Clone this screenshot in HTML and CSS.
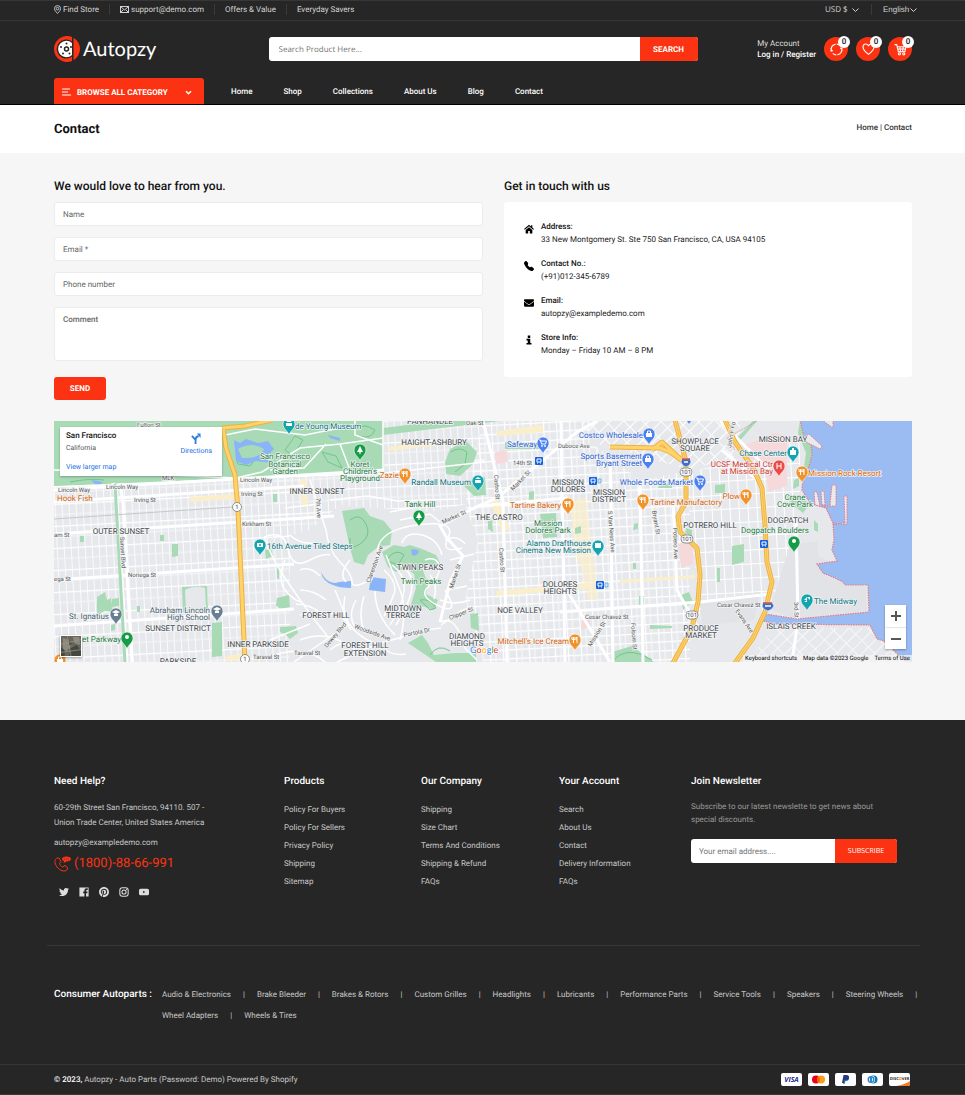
FILE: index.html
```html
<!DOCTYPE html>
<html lang="en">
<head>
<meta charset="utf-8">
<meta name="viewport" content="width=device-width, initial-scale=1">
<title>Contact - Autopzy</title>
<link rel="stylesheet" href="styles.css">
</head>
<body>
<header class="header">
  <div class="topbar">
    <div class="wrap topbar-row">
      <ul class="top-links">
        <li><a href="#"><svg class="ico-pin" viewBox="0 0 16 20"><path d="M8 1a7 7 0 0 0-7 7c0 4.500 7 11 7 11s7-6.500 7-11a7 7 0 0 0-7-7z"/><circle cx="8" cy="8" r="3"/></svg>Find Store</a></li>
        <li><a href="#"><svg class="ico-mail" viewBox="0 0 18 14"><rect x="1" y="1" width="16" height="12"/><path d="M1 1l8 7 8-7M1 13l6-6M17 13l-6-6"/></svg>support@demo.com</a></li>
        <li><a href="#">Offers &amp; Value</a></li>
        <li><a href="#">Everyday Savers</a></li>
      </ul>
      <div class="top-selects">
        <label class="pick pick-currency"><select aria-label="Currency"><option>USD $</option></select><svg viewBox="0 0 14 8"><path d="M1 1l6 6 6-6"/></svg></label>
        <label class="pick pick-language"><select aria-label="Language"><option>English</option></select><svg viewBox="0 0 14 8"><path d="M1 1l6 6 6-6"/></svg></label>
      </div>
    </div>
  </div>

  <div class="wrap brand-row">
    <a class="logo" href="#">
      <svg viewBox="0 0 52 52">
        <path fill="#fb3312" d="M36 2v48A26 26 0 1 1 36 2z"/>
        <path fill="#fb3312" d="M39 3.500a26 26 0 0 1 0 45z"/>
        <path fill="#262626" d="M36 11v30a19 19 0 1 1 0-30z"/>
        <path fill="#fff" d="M36 14v24a16.500 16.500 0 1 1 0-24z"/>
        <circle cx="25" cy="26" r="4" fill="#fff" stroke="#262626" stroke-width="3"/>
        <g fill="#262626"><circle cx="25" cy="15" r="2"/><circle cx="14" cy="22" r="2"/><circle cx="18" cy="35" r="2"/><circle cx="31" cy="35" r="2"/><circle cx="34" cy="22" r="2"/></g>
      </svg>
      <span>Autopzy</span>
    </a>
    <form class="search">
      <input type="search" aria-label="Search products" placeholder="Search Product Here...">
      <button type="button">SEARCH</button>
    </form>
    <div class="account">
      <div class="account-text"><span>My Account</span><a href="#">Log in / Register</a></div>
      <a class="round" href="#" aria-label="Compare"><svg viewBox="0 0 24 24"><path d="M2 11a10 10 0 0 1 17-6M22 13a10 10 0 0 1-17 6" stroke-dasharray="13 2"/><path d="M22 8v4l-3-3M2 16v-4l3 3"/></svg><b>0</b></a>
      <a class="round" href="#" aria-label="Wishlist"><svg viewBox="0 0 24 24"><path d="M12 21C5 16 2 12 2 8a5 5 0 0 1 10-2 5 5 0 0 1 10 2c0 4-3 8-10 13z"/></svg><b>0</b></a>
      <a class="round" href="#" aria-label="Cart"><svg viewBox="0 0 24 24"><path d="M1 3h4l3 13h12l2-9H6M7 11h14M11 7l1 9M17 7l-1 9"/><circle cx="10" cy="20" r="2"/><circle cx="18" cy="20" r="2"/></svg><b>0</b></a>
    </div>
  </div>

  <nav class="wrap nav-row">
    <button class="browse" type="button">
      <svg class="ico-bars" viewBox="0 0 9 8"><path d="M0 1h8M0 4h6M0 7h9"/></svg>
      <span>BROWSE ALL CATEGORY</span>
      <svg class="ico-down" viewBox="0 0 14 9"><path d="M2 2l5 5 5-5"/></svg>
    </button>
    <ul class="menu">
      <li><a href="#">Home</a></li><li><a href="#">Shop</a></li><li><a href="#">Collections</a></li><li><a href="#">About Us</a></li><li><a href="#">Blog</a></li><li><a href="#">Contact</a></li>
    </ul>
  </nav>
</header>

<div class="title-band">
  <div class="wrap title-row">
    <h1>Contact</h1>
    <p class="crumbs"><a href="#">Home</a> | <span>Contact</span></p>
  </div>
</div>

<main class="wrap main">
  <div class="columns">
    <section>
      <h2>We would love to hear from you.</h2>
      <form class="contact-form">
        <input type="text" aria-label="Name" placeholder="Name">
        <input type="email" aria-label="Email" placeholder="Email *">
        <input type="tel" aria-label="Phone number" placeholder="Phone number">
        <textarea aria-label="Comment" placeholder="Comment"></textarea>
        <button type="button">SEND</button>
      </form>
    </section>
    <section>
      <h2>Get in touch with us</h2>
      <ul class="info-card">
        <li><svg viewBox="0 0 24 24"><path d="M12 2L0 12l2 2L12 5.500 22 14l2-2-4-3.500V3h-3v3z"/><path d="M12 7.500L4 14.500V23h6v-6h4v6h6v-8.500z"/></svg><div><strong>Address:</strong><span>33 New Montgomery St. Ste 750 San Francisco, CA, USA 94105</span></div></li>
        <li><svg viewBox="0 0 16 16"><path d="M1.885.511a1.745 1.745 0 0 1 2.610.163L6.290 2.980c.329.423.445.974.315 1.494l-.547 2.190a.678.678 0 0 0 .178.643l2.457 2.457a.678.678 0 0 0 .644.178l2.189-.547a1.745 1.745 0 0 1 1.494.315l2.306 1.794c.829.645.905 1.870.163 2.611l-1.034 1.034c-.740.740-1.846 1.065-2.877.702a18.634 18.634 0 0 1-7.010-4.420 18.634 18.634 0 0 1-4.420-7.009c-.362-1.030-.037-2.137.703-2.877z"/></svg><div><strong>Contact No.:</strong><span>(+91)012-345-6789</span></div></li>
        <li><svg viewBox="0 0 512 512"><path d="M502.300 190.800c3.900-3.100 9.700-.2 9.700 4.700V400c0 26.500-21.500 48-48 48H48c-26.500 0-48-21.500-48-48V195.600c0-5 5.700-7.800 9.700-4.700 22.400 17.400 52.100 39.500 154.100 113.600 21.100 15.400 56.700 47.800 92.200 47.600 35.700.3 72-32.800 92.300-47.600 102-74.100 131.600-96.300 154-113.700zM256 320c23.200.4 56.600-29.200 73.400-41.400 132.700-96.300 142.800-104.700 173.400-128.700 5.800-4.500 9.200-11.500 9.200-18.900v-19c0-26.500-21.500-48-48-48H48c-26.500 0-48 21.500-48 48v19c0 7.400 3.400 14.300 9.200 18.900 30.600 23.900 40.700 32.400 173.400 128.700 16.800 12.200 50.200 41.800 73.400 41.400z"/></svg><div><strong>Email:</strong><span>autopzy@exampledemo.com</span></div></li>
        <li><svg viewBox="0 0 24 24"><path d="M9 1h6v6H9zM6 9h9v10h3v4H6v-4h3v-6H6z"/></svg><div><strong>Store Info:</strong><span>Monday – Friday 10 AM – 8 PM</span></div></li>
      </ul>
    </section>
  </div>

  <section class="map" aria-label="Map of San Francisco">
    <svg class="map-art" viewBox="54 421 858 241" preserveAspectRatio="xMidYMid slice">
      <defs>
        <pattern id="gw" width="7" height="22" patternUnits="userSpaceOnUse" patternTransform="rotate(-3)"><path d="M0 0v22" stroke="#fff" stroke-width="1.600"/><path d="M0 0h7" stroke="#fff" stroke-width="2.500"/><path d="M0 11h7" stroke="#f6f7f8" stroke-width="1"/></pattern>
        <pattern id="ge" width="13" height="9" patternUnits="userSpaceOnUse" patternTransform="rotate(-3)"><path d="M0 0v9M0 0h13" stroke="#fff" stroke-width="2.400"/><path d="M6 0v9" stroke="#f8f9fa" stroke-width="1"/></pattern>
        <pattern id="gp" width="9" height="14" patternUnits="userSpaceOnUse" patternTransform="rotate(-3)"><path d="M0 0v14M0 0h9" stroke="#fff" stroke-width="2"/></pattern>
        <pattern id="gd" width="13" height="9" patternUnits="userSpaceOnUse" patternTransform="rotate(-45)"><path d="M0 0v9M0 0h13" stroke="#fff" stroke-width="1.800"/></pattern>
        <g id="pin"><path d="M0 11C-1 7-6 5-6 0a6 6 0 0 1 12 0c0 5-5 7-6 11z" stroke="#fff" stroke-width=".6"/></g>
        <g id="fork" fill="none" stroke="#fff" stroke-width="1"><path d="M-1.500-3v6M-3-3v2.500h3V-3M2 3v-6q-1 1-1 3h1"/></g>
        <g id="tree" fill="#fff"><path d="M0-4l3 6H.6v2H-.6V2H-3z"/></g>
        <g id="bag" fill="#fff"><path d="M-3-1h6v4h-6z"/><path d="M-1.500-1v-2h3v2" fill="none" stroke="#fff"/></g>
        <g id="cartg" fill="none" stroke="#fff"><path d="M-4-3h1.500l1 4h4l1-3h-6"/><circle cx="-1" cy="3" r=".6"/><circle cx="2" cy="3" r=".6"/></g>
        <g id="bus"><rect x="-4" y="-4" width="8" height="8" rx="1" fill="#1463dc"/><path d="M-2-2h4v3h-4zM-2 2h1M1 2h1" fill="none" stroke="#fff"/></g>
        <g id="hw"><rect x="-6" y="-4" width="12" height="8" rx="4" fill="#fff" stroke="#777" stroke-width=".8"/><text y="2" text-anchor="middle" class="s">101</text></g>
      </defs>
      <rect x="54" y="421" width="858" height="241" fill="#e6e8ec"/>
      <path fill="url(#gw)" d="M54 478L290 470V662H54z"/>
      <path fill="url(#gw)" d="M275 478L383 470V421H485V500L430 512 340 505 310 530 275 540z"/>
      <path fill="url(#ge)" d="M483 421H690V662H483L465 600 478 540 465 505z"/>
      <path fill="url(#gp)" d="M685 470L800 440V540L770 612 700 620z"/>
      <path fill="#e6e8ec" d="M590 421H740V462L640 480 590 442z"/>
      <path fill="url(#gd)" d="M580 421H740V455L690 470 600 445z"/>
      <path fill="url(#gd)" d="M775 628L870 628 905 662H745z" opacity=".7"/>
      <path fill="#e1e3e7" d="M790 545l28-4v15l18 8-18 1 10 12 38 10 1 24-72 8-25-10zM700 602l60-10-6 28-52 6z"/>

      <g fill="#fbeecb"><path d="M190 497l45-3v5l-45 3zM300 480l6-1 2 27-6 1zM496 591l94-8v5l-94 8zM388 447l55-6v4l-55 6zM497 431l46-6v7l-46 4zM226 656l22-3v6l-22 2zM490 500l8-1 12 30-8 3zM620 580l75-5v3l-75 5z"/><path d="M570 500l16-2 12 100-10 2-6-30-8-20z" opacity=".7"/></g>
      <g fill="#f6d9da"><path d="M495 452l12-2 1 12-12 2zM678 544l15-5v25l-12 4zM745 445l30-12 12 3v50l-18 6-5-28-20-8zM582 621l8-2v8l-9 3z"/></g>

      <g fill="#a8dab5">
        <path d="M54 421H383L384 473 236 480 54 486z"/>
        <path d="M383 435L500 421H440L383 428z"/>
        <path d="M450 449L466 441 477 452 473 464 460 476 446 474 445 462z"/>
        <path d="M467 481l18-4 1 18-12 1-10-10z"/>
        <path d="M342 511l22-3 6 8 14 5 8 10-2 14-12 2-10 8-4 10-10-3-4-14z"/>
        <path d="M382 552l12-7 10 2 6-2 12 4 14 6 4 8-8 6-4-5-6 4 6 16-2 10 12 6-4 10-12-4-10 10-4-2 8-26-2-14-8-6-10 4-8-5z"/>
        <path d="M408 643l14-8 6 8 6 12 20-2 18 0-4-10 8 8v11H436z"/><path d="M470 614l8-1 1 18-8-3z"/>
        <path d="M540 514l16-1 1 24-14 1zM488 521l4-1 1 12-5-3zM529 492l5-1v9l-5 0zM575 528l6-2v7l-6 1zM505 442l20 3 20-2v6l-40 0z"/>
        <path d="M172 544l6 0v12l-6 1zM97 597l8-5 2 8 4-2 2 14-8-1-8 4zM112 599l7-1v8l-7 1zM212 623l10-1v34l-10 1zM111 625l4-1v6l-4 1zM137 606h3v6h-3zM160 535h4v6h-4zM80 536h4v6h-4zM273 494h4v8h-4z"/>
        <path d="M277 598l12-3 1 12-10 2-4-4zM280 627l16-1 2 7-8 6-4-4-6-3zM265 550l6-1 2 7-7 3zM277 566l2 0v13l-2-1z"/>
        <path d="M715 485l10-1v9h-10zM732 546l12-2v18l-12 3zM681 595l8-3 4 10-10 8zM634 524l4-1v6l-5 1zM639 596h5v11h-5zM633 563h3v6h-3zM717 568h3v14h-3zM686 528l6 2v6l-7-3zM814 520l4 4v8l-4-2zM660 484l12-1v5l-14 0zM794 480l5-2v8l-6 3z"/>
        <path d="M800 421l4 16 7 8 1 10-4 15-4-3 2-14-8-20zM735 440l18-19h4l-20 23z"/>
        <path d="M612 652l20-6 22 16h-42z"/>
        <path d="M182 587l25-1 1 24-25 2z"/>
        <path d="M650 625l22 1v2l-22 1zM785 495l18 2 6 8-6 8-10-8z"/>
      </g>
      <path fill="#e6e8ec" d="M185 590c4-3 14-4 20-2l1 20-20 2z"/>
      <g fill="none" stroke="#73c58b" stroke-width="1">
        <path d="M285 450l10-14 8 4-10 16zM322 452l14 4 6 12-14-6zM236 458q10-10 20 0l-6 8-12-2zM451 452q8-6 16 0l-2 12-10 8M350 520q10-8 16 4t-6 20-10-6M388 558q8-10 16-3l-6 10-10-4M420 600q10-2 16 8l-6 2-10-10M430 655q8-12 20-4M612 662q14-18 40-2M355 430q8-8 20 0-4 10-16 6M70 482q20-4 34-2"/>
      </g>
      <g fill="#8ab4f8"><path d="M234 440l6 3 6-4 12 4 10-2 6 8-6 6 4 8-16-2-10 4-10-4z"/><path d="M321 572q7 14 18 10l12-1v7q-12 0-18-3-10-3-12-13zM371 577l15 2-1 13-16-2zM411 550q4-2 8 1-2 6-7 4zM91 480l6 6 6-3-4-2zM328 435l12 3v3l-10-3z"/></g>
      <path fill="#a8dab5" d="M238 449q14-8 26 0-4 10-22 9z"/>

      <g fill="none" stroke="#fff" stroke-width="1.500">
        <path d="M54 470L236 478 262 472 300 448 340 444 383 438M225 435l30-6 50 6 40-8M270 470l34-2 22-24M355 421v14l28 10M340 444l10 26M383 421v52M54 487L236 479 385 473 485 462" />
        <path d="M264 537q8 20 14 30t20 30 30 40M264 537q20-8 24 12t20 12 22-6M285 560q-8 20 0 30t16 12M300 570q10-4 20 6M310 480l16 50q2 20 14 32t12 20 20-3l6-25q-2-12 10-20t40-10 20 14 14 10"/>
        <path d="M335 590l14 34q10 14 28 20l22-6q20-8 42-10M441 625l20-14 10-4M441 622q12-6 20 14l4 12 12 12M377 644l-40 18M349 624l-35 24-20 14M300 615q30-8 46 6M400 640q8-30 0-50t-14-35M395 635q-20-20-20-44M356 600q-8 14-2 26"/>
        <path d="M400 565q12 6 12 20t-16 40M392 565q14 10 12 26t-14 34M384 570q14 12 10 24t-10 22M425 560q12-4 14 6t-10 20 10 20 6-16M442 555q-4-16-20-20t-20 8M330 500l38-4 30 5 60-2M445 540q12-6 20 4M300 640q20-8 38 0t30 20M270 640l40-16M275 655q30-10 50 7"/>
        <path d="M345 596q-4 20 6 34M364 596q-6 20 0 34M290 535q10 10 26 8M292 520l30-4M285 508l34-4M430 575q8 10 4 24M447 590l20-4M450 560l24-6M440 600q14 6 30 0M400 520l30-6 10 8M390 512l30-6M350 560q-12 14-4 22M330 650q12-10 24-6M386 650q8 6 20 4M300 590q14 0 26 10M296 604q14 0 26 10"/>
      </g>
      <g fill="none" stroke="#fff" stroke-width="3">
        <path d="M113 483l4 20 10 159M120 483l3 20 9 159M54 502l250-16M54 534l280-18M54 580l240-16M54 626l240-17M54 490l330-20M483 421l20 80 4 161M561 421l4 241M610 455l3 207M640 480l3 182M673 500l4 90 20 36M796 520l2 100-6 42"/>
        <path d="M597 421L577 432 497 498 478 506 440 526 447 538 463 556 450 582 440 622M478 506l90-8M560 612l140-10 70-8M610 662l-42-70M722 450l40 34M720 421l50 50"/>
      </g>
      <path d="M115 484l10 178" fill="none" stroke="#a8dab5" stroke-width="3"/>
      <path d="M54 519L232 507" fill="none" stroke="#c6c8cc"/>
      <path d="M735 450l-8-12 30-17" fill="none" stroke="#ea7f86" stroke-dasharray="1 1"/>

      <path fill="#9bbcf2" stroke="#e57b86" stroke-width="1.200" stroke-dasharray="1.500 1" d="M800 420l4 17 7 8 1 10-4 15-5 5-1 15 6 10 7 5 11 3 7 15 1 17-2 10 5 11-20 3 6 9 12 5 8 4 2 3h23l1 27-72 7-32-5-2 7 12 3 95 1 7 14 7 2 21 20h10V418z"/>
      <g fill="#e8eaed" stroke="#e57b86" stroke-width="1" stroke-dasharray="1.500 1"><path d="M805 437l4-3 13 12-2 3-14-7zM822 420l11 8V420M815 505l-1-13 3 0 3 14zM822 505l-1-14h3l1 14zM830 505l2-20h4v21h-12zM833 524l12-1-1-27h3v28z"/></g>

      <g fill="none" stroke-linejoin="round">
        <g stroke="#eeb043" stroke-width="5"><path d="M272 420L245 426 223 428 226 448 235 475 238 510 245 662M675 420l11 42v40l-8 14 2 16 17 16 3 27-2 27-6 26-19 35M725 420l10 22 18 26 9 20 3 37 2 37 5 20-7 30-12 26-18 25M610 447l50 1 10 4 14 10M652 450l10-8 22 20M609 421"/></g>
        <g stroke="#fdd36a" stroke-width="3"><path d="M272 420L245 426 223 428 226 448 235 475 238 510 245 662M675 420l11 42v40l-8 14 2 16 17 16 3 27-2 27-6 26-19 35M725 420l10 22 18 26 9 20 3 37 2 37 5 20-7 30-12 26-18 25M610 447l50 1 10 4 14 10M652 450l10-8 22 20M609 421"/></g>
        <path d="M675 420l11 42v40l-8 14 2 16 17 16 3 27-2 27-6 26-19 35M725 420l10 22 18 26 9 20 3 37 2 37 5 20-7 30-12 26-18 25" stroke="#eeb043" stroke-width=".7"/>
      </g>

      <g class="street">
        <text x="58" y="492">Lincoln Way</text><text x="106" y="489">Lincoln Way</text><text x="240" y="482">Lincoln Way</text><text x="134" y="502">Irving St</text><text x="241" y="496">Irving St</text><text x="242" y="526">Kirkham St</text><text x="54" y="537">am St</text><text x="54" y="581">ega St</text><text x="128" y="577">Noriega St</text><text x="253" y="659">Taraval St</text><text x="294" y="655">Taraval St</text>
        <text transform="translate(120 537) rotate(87)">Sunset Blvd</text><text transform="translate(316 498) rotate(87)">7th Ave</text><text transform="translate(327 648) rotate(-50)">Dewey Blvd</text><text transform="translate(354 628) rotate(20)">Woodside Ave</text><text transform="translate(370 583) rotate(-70)">Clarendon Ave</text><text transform="translate(443 524) rotate(-24)">Market St</text><text transform="translate(453 589) rotate(-72)">Market St</text><text transform="translate(513 491) rotate(-46)">Market St</text><text transform="translate(494 475) rotate(86)">Castro St</text><text transform="translate(499 548) rotate(86)">Castro St</text><text transform="translate(450 620) rotate(-22)">Clipper St</text><text transform="translate(404 637) rotate(-12)">Portola Dr</text>
        <text x="513" y="465">14th St</text><text x="558" y="448">Duboce Ave</text><text x="466" y="425">Oak St</text><text x="585" y="619">Cesar Chavez St</text><text x="717" y="607">Cesar Chavez St</text><text transform="translate(608 511) rotate(86)">S Van Ness Ave</text><text transform="translate(652 511) rotate(80)">Bryant St</text><text transform="translate(673 528) rotate(88)">Potrero Ave</text><text transform="translate(591 647) rotate(-58)">Mission St</text><text transform="translate(735 611) rotate(55)">Evans Ave</text><text transform="translate(794 602) rotate(88)">3rd St</text><text transform="translate(631 623) rotate(86)">Folsom St</text><text transform="translate(731 448) rotate(-80)">John F Fo</text><text x="162" y="480">MLK</text><text x="137" y="427">Fulton St</text>
      </g>
      <g class="district">
        <text x="317" y="494">INNER SUNSET</text><text x="121" y="534">OUTER SUNSET</text><text x="178" y="631">SUNSET DISTRICT</text><text x="258" y="647">INNER PARKSIDE</text><text x="178" y="664">PARKSIDE</text><text x="326" y="618">FOREST HILL</text><text x="365" y="648">FOREST HILL</text><text x="365" y="656">EXTENSION</text><text x="430" y="424">PANHANDLE</text><text x="434" y="445">HAIGHT-ASHBURY</text><text x="499" y="520">THE CASTRO</text><text x="420" y="570">TWIN PEAKS</text><text x="403" y="611">MIDTOWN</text><text x="403" y="618">TERRACE</text><text x="467" y="639">DIAMOND</text><text x="467" y="646">HEIGHTS</text><text x="520" y="613">NOE VALLEY</text><text x="560" y="587">DOLORES</text><text x="560" y="594">HEIGHTS</text><text x="568" y="485">MISSION</text><text x="568" y="492">DOLORES</text><text x="609" y="495">MISSION</text><text x="609" y="502">DISTRICT</text><text x="695" y="444">SHOWPLACE</text><text x="695" y="451">SQUARE</text><text x="783" y="442">MISSION BAY</text><text x="710" y="528">POTRERO HILL</text><text x="788" y="523">DOGPATCH</text><text x="701" y="631">PRODUCE</text><text x="701" y="638">MARKET</text><text x="791" y="629">ISLAIS CREEK</text>
      </g>
      <g class="place">
        <g class="green mid"><text x="285" y="459">San Francisco</text><text x="285" y="467">Botanical</text><text x="285" y="474">Garden</text><text x="360" y="467">Koret</text><text x="360" y="474">Children's</text><text x="360" y="481">Playground</text><text x="420" y="507">Tank Hill</text><text x="421" y="584">Twin Peaks</text><text x="548" y="526">Mission</text><text x="548" y="533">Dolores Park</text><text x="795" y="500">Crane</text><text x="795" y="507">Cove Park</text><text x="775" y="533">Dogpatch Boulders</text></g>
        <g class="green end"><text x="121" y="642">Sunset Parkway</text></g>
        <g class="teal"><text x="295" y="429">de Young Museum</text><text x="267" y="549">16th Avenue Tiled Steps</text><text x="814" y="604">The Midway</text></g>
        <g class="teal end"><text x="471" y="485">Randall Museum</text><text x="591" y="546">Alamo Drafthouse</text><text x="591" y="553">Cinema New Mission</text><text x="787" y="456">Chase Center</text></g>
        <g class="slate end"><text x="109" y="619">St. Ignatius</text><text x="210" y="613">Abraham Lincoln</text><text x="210" y="620">High School</text></g>
        <g class="orange"><text x="57" y="501">Hook Fish</text><text x="650" y="505">Tartine Manufactory</text><text x="808" y="476">Mission Rock Resort</text></g>
        <g class="orange end"><text x="399" y="478">Zazie</text><text x="561" y="508">Tartine Bakery</text><text x="569" y="644">Mitchell's Ice Cream</text><text x="740" y="499">Plow</text></g>
        <g class="blue end"><text x="537" y="447">Safeway</text><text x="643" y="438">Costco Wholesale</text><text x="642" y="459">Sports Basement</text><text x="642" y="466">Bryant Street</text><text x="693" y="485">Whole Foods Market</text></g>
        <g class="red end"><text x="773" y="467">UCSF Medical Ctr</text><text x="773" y="474">at Mission Bay</text></g>
      </g>
      <g fill="#f0932b"><use href="#pin" x="405" y="474"/><use href="#pin" x="568" y="504"/><use href="#pin" x="575" y="640"/><use href="#pin" x="643" y="500"/><use href="#pin" x="746" y="495"/><use href="#pin" x="802" y="472"/><use href="#pin" x="60" y="660"/></g>
      <use href="#fork" x="405" y="474"/><use href="#fork" x="568" y="504"/><use href="#fork" x="575" y="640"/><use href="#fork" x="643" y="500"/><use href="#fork" x="746" y="495"/><use href="#fork" x="802" y="472"/><use href="#bag" x="60" y="660"/>
      <g fill="#169b48"><use href="#pin" x="360" y="450"/><use href="#pin" x="419" y="516"/><use href="#pin" x="127" y="638"/><use href="#pin" x="794" y="542"/></g>
      <use href="#tree" x="360" y="450"/><use href="#tree" x="419" y="516"/><circle cx="127" cy="637" r="2" fill="#fff"/><circle cx="794" cy="541" r="2" fill="#fff"/>
      <g fill="#12a4af"><use href="#pin" x="289" y="424"/><use href="#pin" x="260" y="545"/><use href="#pin" x="478" y="481"/><use href="#pin" x="598" y="546"/><use href="#pin" x="793" y="452"/><use href="#pin" x="807" y="600"/></g>
      <path d="M286 422l3-2 3 2zM286 423h6v3h-6zM475 479l3-2 3 2zM475 480h6v3h-6zM257 543h6v4h-6zM595 543h6v5h-6zM790 450h2v-2h2v2h2v5h-6zM804 600l3-3v3zM807 597h3v3zM804 602h3v-2z" fill="#fff"/><circle cx="260" cy="545" r="1" fill="#12a4af"/>
      <g fill="#4a80f0"><use href="#pin" x="543" y="443"/><use href="#pin" x="649" y="434"/><use href="#pin" x="648" y="459"/><use href="#pin" x="700" y="481"/><use href="#pin" x="689" y="414"/></g>
      <use href="#cartg" x="543" y="443"/><use href="#bag" x="649" y="434"/><use href="#bag" x="648" y="459"/><use href="#cartg" x="700" y="481"/>
      <g fill="#687e92"><use href="#pin" x="116" y="614"/><use href="#pin" x="217" y="611"/></g>
      <path d="M112 612l4-2 4 2-4 2zM114 614h4v2h-4zM213 609l4-2 4 2-4 2zM215 611h4v2h-4z" fill="#fff"/>
      <use href="#pin" x="779" y="466" fill="#e94b4b"/><path d="M777 463v6M781 463v6M777 466h4" stroke="#fff"/>
      <use href="#bus" x="539" y="461"/><use href="#bus" x="593" y="481"/><use href="#bus" x="600" y="585"/><use href="#bus" x="764" y="544"/>
      <path d="M598 479h3v4h-3zM605 583h3v4h-3z" fill="#cfe6f7" stroke="#3a9bd8" stroke-width=".6"/>
      <use href="#hw" x="686" y="472"/><use href="#hw" x="687" y="539"/><use href="#hw" x="692" y="615"/>
      <g fill="#fff" stroke="#777" stroke-width=".8"><circle cx="237" cy="507" r="4.500"/><circle cx="245" cy="659" r="4.500"/></g><text x="237" y="509" class="s" text-anchor="middle">1</text><text x="245" y="661" class="s" text-anchor="middle">1</text>
      <g fill="#3d6fc4" stroke="#fff" stroke-width=".6"><path d="M682 458q4 1 8 0l1 4q-1 4-5 5-4-1-5-5zM763 602q5 1 9 0l2 4q-2 4-6 5-5-1-6-5z"/></g><path d="M682 459h8M763 603h9" stroke="#d9534f" stroke-width="1.500"/><path d="M684 462h4M765 606h6" stroke="#fff" stroke-width="1.500"/>
      <text class="google" x="470" y="653"><tspan fill="#4285f4">G</tspan><tspan fill="#ea4335">o</tspan><tspan fill="#fbbc05">o</tspan><tspan fill="#4285f4">g</tspan><tspan fill="#34a853">l</tspan><tspan fill="#ea4335">e</tspan></text>
    </svg>

    <div class="map-card">
      <div class="map-card-text"><strong>San Francisco</strong><span>California</span><a href="#">View larger map</a></div>
      <a class="directions" href="#"><svg viewBox="0 0 22 24"><path d="M10 24V15L2 6M10 17q0-10 7-10" fill="none" stroke="#2f7de1" stroke-width="4"/><path d="M13 1h8v10z" fill="#2f7de1"/></svg>Directions</a>
    </div>
    <button class="satellite" type="button" aria-label="Show satellite imagery"><svg viewBox="0 0 22 22"><path fill="#67665c" d="M0 0h22v22H0z"/><path fill="#8b8a7c" d="M2 2l6 2 3 7-5 6-4-3zM13 1h7l1 9-6-2z"/><path fill="#45483e" d="M10 14l7-4 5 6v6H9zM0 12l4 4v6H0zM8 5l4 3-3 3z"/><path d="M0 9l22-5M7 0l4 22M0 18l22-3" stroke="#9b998c" stroke-width=".8"/></svg></button>
    <div class="zoomer"><button type="button" aria-label="Zoom in"><svg viewBox="0 0 10 10"><path d="M5 0v10M0 5h10"/></svg></button><button type="button" aria-label="Zoom out"><svg viewBox="0 0 10 10"><path d="M0 5h10"/></svg></button></div>
    <p class="map-legal"><a href="#">Keyboard shortcuts</a><span>Map data ©2023 Google</span><a href="#">Terms of Use</a></p>
  </section>
</main>

<footer class="footer">
  <div class="wrap foot-grid">
    <section class="help">
      <h3>Need Help?</h3>
      <p>60-29th Street San Francisco, 94110. 507 -<br>Union Trade Center, United States America</p>
      <a class="mail" href="#">autopzy@exampledemo.com</a>
      <a class="phone" href="#"><svg viewBox="0 0 34 32"><path d="M10 4C5 3 1 7 2 13c2 9 9 16 17 17 5 1 9-3 8-7l-5-4-5 3c-3-1-5-4-6-7l3-4-3-5z" fill="none" stroke="#fb3312" stroke-width="2"/><path d="M25 1c6 0 9 2 9 5s-3 5-9 5l-6 3 1-4c-3-1-4-2-4-4 0-3 3-5 9-5z" fill="#fb3312"/><path d="M20 6h2M24 6h2M28 6h2" stroke="#262626" stroke-width="1"/></svg>(1800)-88-66-991</a>
      <ul class="social">
        <li><a href="#" aria-label="Twitter"><svg viewBox="0 0 24 24"><path d="M23.953 4.570a10 10 0 0 1-2.825.775 4.958 4.958 0 0 0 2.163-2.723c-.951.555-2.005.959-3.127 1.184a4.920 4.920 0 0 0-8.384 4.482C7.690 8.095 4.067 6.130 1.640 3.162a4.822 4.822 0 0 0-.666 2.475c0 1.710.870 3.213 2.188 4.096a4.904 4.904 0 0 1-2.228-.616v.060a4.923 4.923 0 0 0 3.946 4.827 4.996 4.996 0 0 1-2.212.085 4.936 4.936 0 0 0 4.604 3.417 9.867 9.867 0 0 1-6.102 2.105c-.390 0-.779-.023-1.170-.067a13.995 13.995 0 0 0 7.557 2.209c9.053 0 13.998-7.496 13.998-13.985 0-.210 0-.420-.015-.630A9.935 9.935 0 0 0 24 4.590z"/></svg></a></li>
        <li><a href="#" aria-label="Facebook"><svg viewBox="0 0 24 24"><path d="M1 1h22v22h-6v-8h3l.5-4H17V9q0-2 2-2h2V3h-3q-5 0-5 5v3h-3v4h3v8H1z"/></svg></a></li>
        <li><a href="#" aria-label="Pinterest"><svg viewBox="0 0 24 24"><path d="M12.017 0C5.396 0 .029 5.367.029 11.987c0 5.079 3.158 9.417 7.618 11.162-.105-.949-.199-2.403.041-3.439.219-.937 1.406-5.957 1.406-5.957s-.359-.720-.359-1.781c0-1.663.967-2.911 2.168-2.911 1.024 0 1.518.769 1.518 1.688 0 1.029-.653 2.567-.992 3.992-.285 1.193.6 2.165 1.775 2.165 2.128 0 3.768-2.245 3.768-5.487 0-2.861-2.063-4.869-5.008-4.869-3.410 0-5.409 2.562-5.409 5.199 0 1.033.394 2.143.889 2.741.099.120.112.225.085.345-.090.375-.293 1.199-.334 1.363-.053.225-.172.271-.401.165-1.495-.690-2.433-2.878-2.433-4.646 0-3.776 2.748-7.252 7.920-7.252 4.158 0 7.392 2.967 7.392 6.923 0 4.135-2.607 7.462-6.233 7.462-1.214 0-2.354-.629-2.758-1.379l-.749 2.848c-.269 1.045-1.004 2.352-1.498 3.146 1.123.345 2.306.535 3.550.535 6.607 0 11.985-5.365 11.985-11.987C23.970 5.390 18.592.026 11.985.026z"/></svg></a></li>
        <li><a href="#" aria-label="Instagram"><svg viewBox="0 0 24 24"><g fill="none" stroke="#ddd" stroke-width="2.500"><rect x="2" y="2" width="20" height="20" rx="6"/><circle cx="12" cy="12" r="5"/></g><circle cx="18" cy="6" r="1.500"/></svg></a></li>
        <li><a href="#" aria-label="YouTube"><svg viewBox="0 0 24 24"><path fill-rule="evenodd" d="M4 4h16q4 0 4 4v8q0 4-4 4H4q-4 0-4-4V8q0-4 4-4zm6 5v6l5-3z"/></svg></a></li>
      </ul>
    </section>
    <section><h3>Products</h3><ul class="links"><li><a href="#">Policy For Buyers</a></li><li><a href="#">Policy For Sellers</a></li><li><a href="#">Privacy Policy</a></li><li><a href="#">Shipping</a></li><li><a href="#">Sitemap</a></li></ul></section>
    <section><h3>Our Company</h3><ul class="links"><li><a href="#">Shipping</a></li><li><a href="#">Size Chart</a></li><li><a href="#">Terms And Conditions</a></li><li><a href="#">Shipping &amp; Refund</a></li><li><a href="#">FAQs</a></li></ul></section>
    <section><h3>Your Account</h3><ul class="links"><li><a href="#">Search</a></li><li><a href="#">About Us</a></li><li><a href="#">Contact</a></li><li><a href="#">Delivery Information</a></li><li><a href="#">FAQs</a></li></ul></section>
    <section class="news">
      <h3>Join Newsletter</h3>
      <p>Subscribe to our latest newslette to get news about special discounts.</p>
      <form class="subscribe"><input type="email" aria-label="Your email address" placeholder="Your email address...."><button type="button">SUBSCRIBE</button></form>
    </section>
  </div>

  <div class="parts">
    <h3>Consumer Autoparts :</h3>
    <ul><li><a href="#">Audio &amp; Electronics</a></li><li><a href="#">Brake Bleeder</a></li><li><a href="#">Brakes &amp; Rotors</a></li><li><a href="#">Custom Grilles</a></li><li><a href="#">Headlights</a></li><li><a href="#">Lubricants</a></li><li><a href="#">Performance Parts</a></li><li><a href="#">Service Tools</a></li><li><a href="#">Speakers</a></li><li><a href="#">Steering Wheels</a></li><li><a href="#">Wheel Adapters</a></li><li><a href="#">Wheels &amp; Tires</a></li></ul>
  </div>

  <div class="legal">
    <div class="wrap legal-row">
      <p><b>© 2023,</b> <a href="#">Autopzy - Auto Parts (Password: Demo)</a> <a href="#">Powered By Shopify</a></p>
      <ul class="cards">
        <li><svg viewBox="0 0 42 26" role="img" aria-label="Visa"><text x="21" y="18" text-anchor="middle" font-size="14" font-weight="700" font-style="italic" fill="#1a1f8f">VISA</text></svg></li>
        <li><svg viewBox="0 0 42 26" role="img" aria-label="Mastercard"><circle cx="16" cy="13" r="8" fill="#eb001b"/><circle cx="26" cy="13" r="8" fill="#f79e1b"/><path d="M21 6.800a8 8 0 0 1 0 12.400 8 8 0 0 1 0-12.400z" fill="#ff5f00"/></svg></li>
        <li><svg viewBox="0 0 42 26" role="img" aria-label="PayPal"><path d="M28 8q2 8-7 8l-2 6h-3l2-6z" fill="#2790c3"/><path d="M17 4h7q5 1 4 6-2 5-7 5h-2l-1 5h-4z" fill="#253b80"/></svg></li>
        <li><svg viewBox="0 0 42 26" role="img" aria-label="Diners Club"><path d="M19 5h4a8 8 0 0 1 0 16h-4z" fill="#0a79be"/><circle cx="18" cy="13" r="8" fill="#fff"/><circle cx="18" cy="13" r="7" fill="#3086c8"/><path d="M16 9v8a5 5 0 0 1 0-8zM20 9v8a5 5 0 0 0 0-8z" fill="#fff"/></svg></li>
        <li><svg viewBox="0 0 42 26" role="img" aria-label="Discover"><path d="M42 16v10H14q18-3 28-10z" fill="#f47920"/><text x="21" y="14" text-anchor="middle" font-size="8" font-weight="700" fill="#222">DISC<tspan fill="#f47920">O</tspan>VER</text></svg></li>
      </ul>
    </div>
  </div>
</footer>
</body>
</html>
```
FILE: styles.css
```css
* { box-sizing: border-box; }
body { margin: 0; background: #f6f6f6; color: #222; font: 8px/13px Roboto, "Liberation Sans", sans-serif; text-rendering: geometricPrecision; }
h1, h2, h3, p, ul { margin: 0; padding: 0; }
ul { list-style: none; }
a { color: inherit; text-decoration: none; }
svg { display: block; flex: none; }
button, input, textarea, select { font: inherit; color: inherit; text-rendering: inherit; border: 0; border-radius: 0; padding: 0; margin: 0; background: none; outline: 0; min-width: 0; }
button { cursor: pointer; }
.wrap { margin: 0 53px 0 54px; }

/* header */
.header { background: #262626; color: #fff; border-bottom: 1px solid #000; }
.topbar { border-top: 1px solid #373737; border-bottom: 1px solid #373737; color: #d2d2d2; }
.topbar-row { display: flex; justify-content: space-between; align-items: center; height: 19px; padding-bottom: 2px; }
.top-links { display: flex; }
.top-links li { padding-right: 10px; margin-right: 10px; border-right: 1px solid #3a3a3a; line-height: 11px; }
.top-links li:last-child { border: 0; }
.top-links a { display: flex; align-items: center; gap: 2px; }
.top-links svg { fill: none; stroke: #d2d2d2; stroke-width: 2; }
.ico-pin { width: 7px; height: 9px; }
.ico-mail { width: 9px; height: 7px; }
.top-selects { display: flex; margin-right: -5px; font-family: "Open Sans", sans-serif; }
.pick { display: flex; align-items: center; line-height: 11px; }
.pick select { appearance: none; height: 11px; }
.pick svg { width: 7px; height: 4px; fill: none; stroke: #d2d2d2; stroke-width: 2; }
.pick-currency { gap: 4px; padding-right: 12px; margin-right: 11px; border-right: 1px solid #3a3a3a; }
.pick-language { font-family: "Liberation Sans", sans-serif; }

.brand-row { display: grid; grid-template-columns: 25% 50% 1fr; align-items: center; padding: 16px 0 17px; }
.logo { display: flex; align-items: center; gap: 3px; height: 24px; font: 20px/24px Lato, sans-serif; }
.logo svg { width: 26px; height: 26px; }
.search { display: flex; height: 24px; border-radius: 3px; overflow: hidden; background: #fff; }
.search input { flex: 1; padding: 0 10px; color: #333; font-family: "Open Sans", sans-serif; }
.search button { width: 58px; background: #fb3312; font-weight: 700; }
.account { display: flex; align-items: center; justify-content: flex-end; gap: 8px; }
.account-text { display: flex; flex-direction: column; line-height: 11px; color: #ddd; }
.account-text a { font-weight: 500; color: #fff; }
.round { position: relative; display: grid; place-items: center; width: 24px; height: 24px; border-radius: 50%; background: #fb3312; }
.round svg { width: 13px; height: 13px; fill: none; stroke: #fff; stroke-width: 2; }
.round b { position: absolute; top: -1px; right: -2px; width: 12px; height: 12px; border-radius: 50%; background: #fff; color: #111; font-size: 8px; font-weight: 500; line-height: 12px; text-align: center; }

.nav-row { display: flex; align-items: center; }
.browse { display: flex; align-items: center; width: 150px; height: 26px; padding: 2px 12px 0 8px; background: #fb3312; border-radius: 3px 3px 0 0; font-weight: 700; }
.browse svg { fill: none; stroke: #fff; }
.ico-bars { width: 9px; height: 8px; margin-right: 6px; }
.ico-down { width: 7px; height: 5px; margin-left: auto; }
.browse .ico-down { stroke-width: 3; }
.menu { display: flex; gap: 31px; margin-left: 27px; font-weight: 500; }

/* page title */
.title-band { background: #fff; }
.title-row { display: flex; justify-content: space-between; align-items: center; height: 48px; }
.title-row h1 { font-size: 13px; font-weight: 700; line-height: 16px; padding-top: 2px; color: #111; }
.crumbs { font-weight: 500; padding-bottom: 4px; color: #333; }

/* contact */
.main { padding: 26px 0 58px; }
.columns { display: grid; grid-template-columns: 50% 1fr; gap: 21px; }
h2 { font-size: 12px; font-weight: 500; line-height: 14px; margin-bottom: 9px; color: #111; }
.contact-form { display: flex; flex-direction: column; gap: 11px; align-items: stretch; }
.contact-form input, .contact-form textarea { height: 24px; padding: 0 8px; background: #fff; border: 1px solid #ececec; border-radius: 3px; }
.contact-form textarea { height: 54px; padding: 5px 8px; resize: none; }
.contact-form ::placeholder { color: #666; opacity: 1; }
.contact-form textarea::placeholder { font-weight: 500; }
.contact-form button { align-self: flex-start; width: 52px; height: 23px; margin-top: 5px; border-radius: 3px; background: #fb3312; color: #fff; font-weight: 700; }
.info-card { display: flex; flex-direction: column; gap: 11px; padding: 18px 20px 20px; background: #fff; border-radius: 3px; }
.info-card li { display: flex; gap: 7px; }
.info-card svg { width: 10px; height: 10px; margin-top: 4px; fill: #000; }
.info-card strong, .info-card span { display: block; }
.info-card strong { font-weight: 500; color: #111; }

/* map */
.map { position: relative; margin-top: 21px; overflow: hidden; }
.map-art { width: 100%; height: 241px; font-family: Roboto, sans-serif; }
.map-art text { paint-order: stroke; stroke: #f4f5f6; stroke-width: 1.500px; stroke-linejoin: round; }
.street, .s { font-size: 6px; fill: #555; }
.district { font-size: 8px; font-weight: 400; fill: #44494e; text-anchor: middle; }
.place { font-size: 8px; font-weight: 400; }
.place .mid { text-anchor: middle; }
.place .end { text-anchor: end; }
.green { fill: #1c7c42; }
.teal { fill: #0b7480; }
.slate { fill: #4d6272; }
.orange { fill: #d5650c; }
.blue { fill: #2a5fd0; }
.red { fill: #d0352f; }
.map-art .google { font: 500 9px Lato, sans-serif; stroke: #fff; }
.map-card { position: absolute; left: 6px; top: 6px; display: flex; justify-content: space-between; width: 162px; height: 49px; padding: 3px 10px 3px 6px; background: #fff; box-shadow: 0 1px 2px #0004; }
.map-card-text { display: flex; flex-direction: column; color: #555; }
.map-card strong { font-weight: 500; color: #111; line-height: 12px; }
.map-card span { font-size: 7px; line-height: 12px; }
.map-card a { font-size: 7px; color: #1a73e8; }
.map-card-text a { margin-top: auto; line-height: 11px; }
.map-card .directions { display: flex; flex-direction: column; align-items: center; gap: 2px; padding-top: 3px; line-height: 10px; }
.directions svg { width: 10px; height: 11px; }
.satellite { position: absolute; left: 6px; bottom: 5px; width: 22px; height: 22px; border: 1px solid #fff; box-shadow: 0 1px 2px #0006; }
.zoomer { position: absolute; right: 6px; bottom: 13px; width: 21px; background: #fff; box-shadow: 0 1px 2px #0005; }
.zoomer button { display: grid; place-items: center; width: 100%; height: 22px; }
.zoomer button + button { border-top: 1px solid #e6e6e6; }
.zoomer svg { width: 10px; height: 10px; stroke: #555; stroke-width: 2; }
.map-legal { position: absolute; right: 0; bottom: 0; display: flex; gap: 6px; padding: 0 2px; background: #f5f5f5c0; color: #000; font-size: 6px; line-height: 7px; }

/* footer */
.footer { background: #262626; color: #c8c8c8; border-bottom: 1px solid #3a3a3a; }
.foot-grid { display: grid; grid-template-columns: 230fr 137fr 138fr 132fr 221fr; padding: 54px 0 48px; }
.footer h3 { font-size: 10px; font-weight: 500; line-height: 15px; color: #fff; }
.links { margin-top: 12px; line-height: 18px; }
.help p { margin-top: 11px; line-height: 15px; }
.mail { display: block; margin-top: 6px; line-height: 14px; }
.phone { display: flex; align-items: center; gap: 3px; margin-top: 5px; color: #fb3312; font-size: 13px; line-height: 18px; }
.phone svg { width: 17px; height: 16px; }
.social { display: flex; gap: 10px; margin: 14px 0 0 5px; }
.social svg { width: 10px; height: 10px; fill: #ddd; }
.news p { margin-top: 11px; color: #999; max-width: 206px; }
.subscribe { display: flex; width: 206px; height: 24px; margin-top: 13px; border-radius: 3px; overflow: hidden; background: #fff; }
.subscribe input { flex: 1; padding: 0 8px; color: #333; }
.subscribe button { width: 62px; background: #fb3312; color: #fff; font-family: "Open Sans", sans-serif; font-size: 7px; }
.parts { display: flex; gap: 10px; margin: 0 45px 0 47px; padding: 38px 0 38px 7px; border-top: 1px solid #373737; }
.parts h3 { flex: none; line-height: 21px; }
.parts ul { display: flex; flex-wrap: wrap; line-height: 21px; }
.parts li::after { content: "|"; margin: 0 12px; }
.parts li:nth-child(10)::after { margin-right: 0; }
.parts li:last-child::after { content: none; }
.legal { border-top: 1px solid #373737; }
.legal-row { display: flex; justify-content: space-between; align-items: center; height: 29px; }
.legal b { font-weight: 500; color: #fff; }
.cards { display: flex; gap: 6px; margin-right: 2px; }
.cards svg { width: 21px; height: 13px; background: #fff; border-radius: 2px; font-family: "Open Sans", sans-serif; }
```
